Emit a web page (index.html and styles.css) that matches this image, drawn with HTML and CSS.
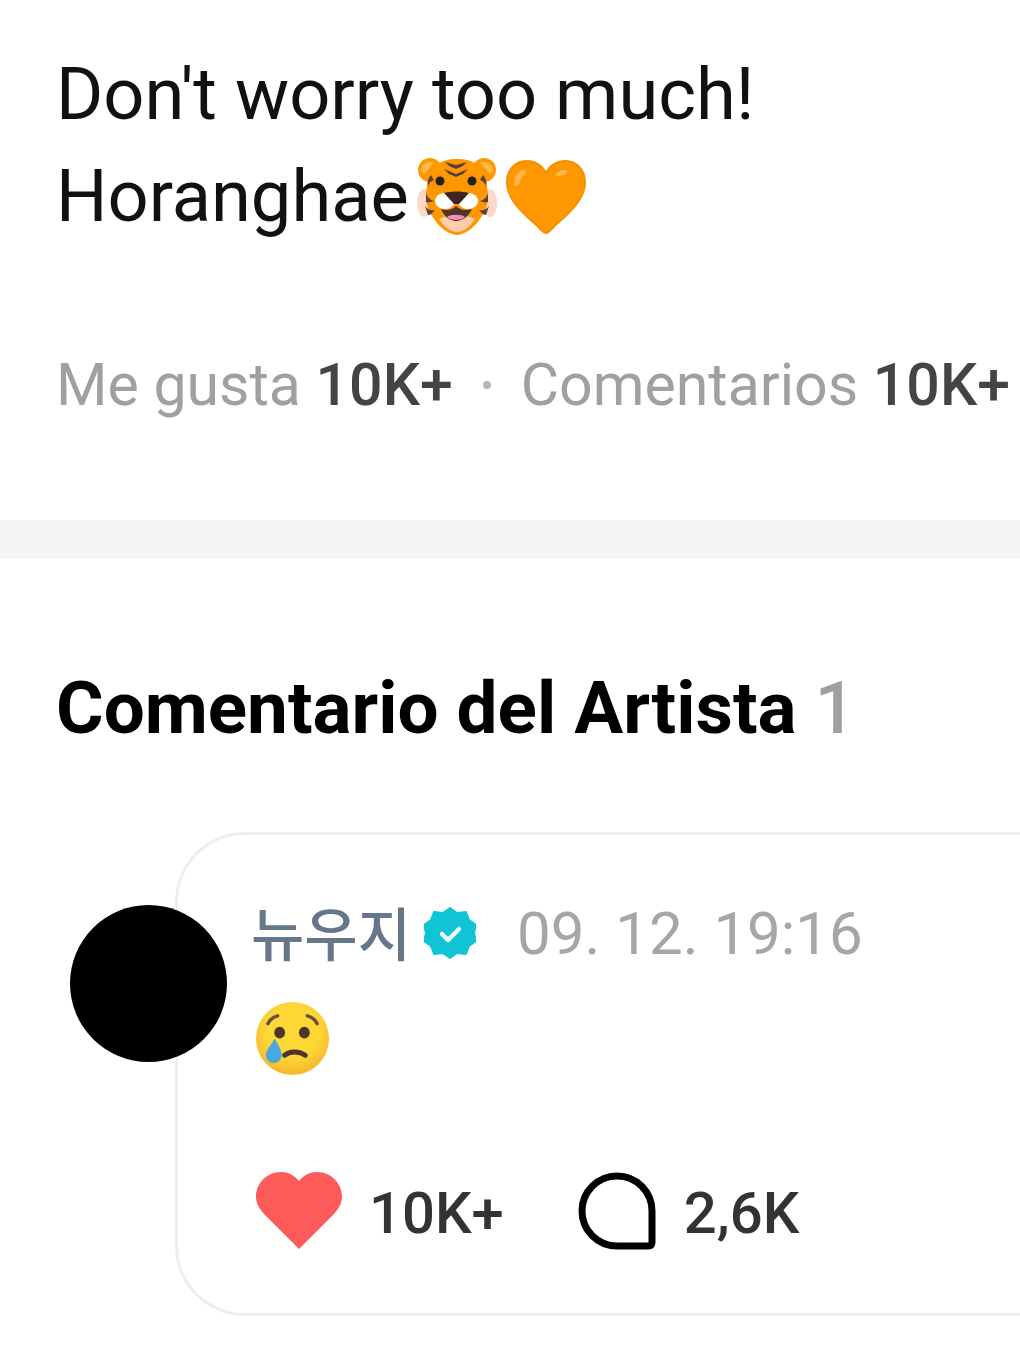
FILE: index.html
```html
<!DOCTYPE html>
<html>
<head>
	<meta charset="UTF-8">
	<title>Comentario del Artista</title>
	<link rel="stylesheet" href="styles.css">
</head>
<body>
	<div class="post">
		<p class="postText">Don't worry too much!</p>
		<p class="postText">Horanghae<svg class="emojiTiger" viewBox="0 0 80 80">
				<circle cx="13" cy="13" r="12" fill="#ff9800"/><circle cx="67" cy="13" r="12" fill="#ff9800"/>
				<path d="M4 14a9 9 0 0 1 13-8l-10 11z" fill="#ffb74d"/><path d="M76 14a9 9 0 0 0-13-8l10 11z" fill="#ffb74d"/>
				<ellipse cx="7" cy="46" rx="7" ry="14" fill="#fcd9c6"/><ellipse cx="73" cy="46" rx="7" ry="14" fill="#fcd9c6"/>
				<path d="M40 2c16 0 27 7 29 21 2 10 3 20 0 28-5 13-18 27-29 27S16 64 11 51c-3-8-2-18 0-28C13 9 24 2 40 2z" fill="#ff9800"/>
				<path d="M22 62c6-3 12-4 18-4s12 1 18 4c-5 8-12 13-18 13s-13-5-18-13z" fill="#ffccae"/>
				<path d="M28 5l11 3 11-3-4 4-7 3-7-3zM27 12l12 5 12-5-5 5-7 3-7-3z" fill="#5d4037"/>
				<path d="M14 18c-3 3-4 7-3 11 1-3 3-5 6-6zM66 18c3 3 4 7 3 11-1-3-3-5-6-6zM9 36c1 4 4 7 8 8-3 1-5 2-8 1zM71 36c-1 4-4 7-8 8 3 1 5 2 8 1zM8 49c3 4 6 5 10 4-2 3-5 5-7 5zM72 49c-3 4-6 5-10 4 2 3 5 5 7 5z" fill="#5d4037"/>
				<circle cx="23" cy="24" r="4.500" fill="#212121"/><circle cx="55" cy="24" r="4.500" fill="#212121"/>
				<ellipse cx="28" cy="44" rx="10" ry="8" fill="#fff"/><ellipse cx="51" cy="44" rx="10" ry="8" fill="#fff"/>
				<path d="M27 36c8-2 17-2 25 0l-10 11h-5z" fill="#3e2723"/>
				<path d="M24 52c6 2 11 1 15-3 4 4 9 5 16 3-3 7-9 12-16 12s-12-5-15-12z" fill="#4e342e"/>
				<path d="M30 60c3-3 15-3 18 0-3 4-15 4-18 0z" fill="#f48fb1"/>
			</svg><svg class="emojiHeart" viewBox="0 0 82 76">
				<path d="M41 75c-3 0-6-4-10-8C19 56 1 42 1 23 1 10 10 1 22 1c8 0 15 4 19 11C45 5 52 1 60 1c12 0 21 9 21 22 0 19-18 33-30 44-4 4-7 8-10 8z" fill="#f59000"/>
				<path d="M41 72c-2 0-5-3-9-7C20 55 3 41 3 24 3 12 12 3 22 3c8 0 15 5 19 12C45 8 52 3 60 3c10 0 19 9 19 21 0 17-17 31-29 41-4 4-7 7-9 7z" fill="#ff9800"/>
				<path d="M9 25c0-7 4-13 9-14 3 0 4 3 1 5-3 2-4 6-5 9-1 3-5 3-5 0zM52 14c3-3 8-4 10-2 1 2-1 3-3 4-2 0-4 1-6 1-2 0-2-2-1-3z" fill="#ffb74d"/>
			</svg></p>
		<div class="stats">
			<span>Me gusta <b>10K+</b></span>
			<span class="dot"></span>
			<span>Comentarios <b>10K+</b></span>
		</div>
	</div>
	<div class="divider"></div>
	<div class="artist">
		<h2 class="artistTitle">Comentario del Artista <span>1</span></h2>
		<div class="comment">
			<div class="avatar"></div>
			<div class="commentHead">
				<span class="name">뉴우지</span>
				<svg class="badge" viewBox="0 0 52 52">
					<path d="M26 1l7 5 9-1 3 8 7 5-2 8 2 8-7 5-3 8-9-1-7 5-7-5-9 1-3-8-7-5 2-8-2-8 7-5 3-8 9 1z" fill="#10c4d6" stroke="#10c4d6" stroke-width="2" stroke-linejoin="round"/>
					<path d="M18 27l6 6 11-11" fill="none" stroke="#e8fbfd" stroke-width="4.500" stroke-linecap="round" stroke-linejoin="round"/>
				</svg>
				<span class="date">09. 12. 19:16</span>
			</div>
			<svg class="emojiCry" viewBox="0 0 76 76">
				<defs>
					<radialGradient id="cryFace" cx="50%" cy="40%" r="60%">
						<stop offset="0.6" stop-color="#fdd835"/>
						<stop offset="1" stop-color="#f6b62c"/>
					</radialGradient>
				</defs>
				<circle cx="38" cy="38" r="37" fill="url(#cryFace)"/>
				<path d="M13 23c2-4 6-7 10-8M63 23c-2-4-6-7-10-8" fill="none" stroke="#6d4c41" stroke-width="3.500" stroke-linecap="round"/>
				<ellipse cx="25" cy="32" rx="5.500" ry="6" fill="#4e342e"/><ellipse cx="50" cy="32" rx="5.500" ry="6" fill="#4e342e"/>
				<path d="M30 55c5-4 14-5 21 0" fill="none" stroke="#4e342e" stroke-width="5" stroke-linecap="round"/>
				<path d="M20 38c3 6 7 11 7 17a8 8 0 0 1-16 0c0-6 6-11 9-17z" fill="#4aa8e0"/>
			</svg>
			<div class="actions">
				<svg class="likeIcon" viewBox="0 0 86 78">
					<path d="M43 77L11 45C4 38 0 32 0 25 0 11 11 0 25 0c7 0 13 3 18 9 5-6 11-9 18-9 14 0 25 11 25 25 0 7-4 13-11 20z" fill="#ff5a5a"/>
				</svg>
				<span class="count likeCount">10K+</span>
				<svg class="replyIcon" viewBox="0 0 78 78">
					<path d="M39 4a35 35 0 0 1 35 35v31q0 4-4 4H39a35 35 0 0 1 0-70z" fill="none" stroke="#000" stroke-width="7"/>
				</svg>
				<span class="count replyCount">2,6K</span>
			</div>
		</div>
	</div>
</body>
</html>
```

FILE: styles.css
```css
html, body {margin: 0;padding: 0;background: #fff;overflow: hidden;}
body {width: 1020px;height: 1361px;font-family: Roboto, "Noto Sans CJK KR", sans-serif;}
p, h2 {margin: 0;}

.post {padding: 44px 0 0 56px;height: 520px;box-sizing: border-box;}
.postText {font-size: 72.2px;line-height: 102px;color: #111;white-space: nowrap;display: flex;align-items: center;}
.emojiTiger {width: 80px;height: 80px;margin-left: 8px;}
.emojiHeart {width: 82px;height: 76px;margin-left: 8px;}

.stats {display: flex;align-items: center;margin-top: 105px;font-size: 59px;line-height: 64px;color: #a0a0a0;white-space: nowrap;}
.stats b {font-weight: 500;color: #444;}
.dot {width: 8px;height: 8px;border-radius: 50%;background: #b5b5b5;margin: 0 30px;}

.divider {height: 39px;background: #f5f5f5;}

.artist {padding-top: 113px;}
.artistTitle {font-size: 72.8px;line-height: 72px;font-weight: 700;color: #000;padding-left: 56px;white-space: nowrap;}
.artistTitle span {color: #a0a0a0;font-weight: 500;}

.comment {position: relative;box-sizing: border-box;margin: 88px 0 0 175px;height: 484px;padding: 66px 0 0 73px;border: 3px solid #eceef5;border-right: 0;border-radius: 70px 0 0 70px;}
.avatar {position: absolute;left: -108px;top: 70px;width: 157px;height: 157px;border-radius: 50%;background: #000;}

.commentHead {display: flex;align-items: center;height: 64px;white-space: nowrap;}
.name {font-size: 58px;line-height: 64px;font-weight: 500;color: #67778a;font-family: "Noto Sans CJK KR", sans-serif;padding-bottom: 4px;}
.badge {width: 52px;height: 52px;margin-left: 13px;}
.date {font-size: 60px;color: #a6a6a6;margin-left: 41px;}

.emojiCry {display: block;width: 75px;height: 75px;margin: 36px 0 0 4px;}

.actions {display: flex;align-items: center;margin-top: 95px;height: 80px;}
.likeIcon {width: 86px;height: 78px;margin-left: 5px;}
.replyIcon {width: 78px;height: 78px;margin-left: 74px;}
.count {font-size: 58px;font-weight: 500;color: #333;padding-top: 4px;}
.likeCount {margin-left: 27px;}
.replyCount {margin-left: 28px;}
```
